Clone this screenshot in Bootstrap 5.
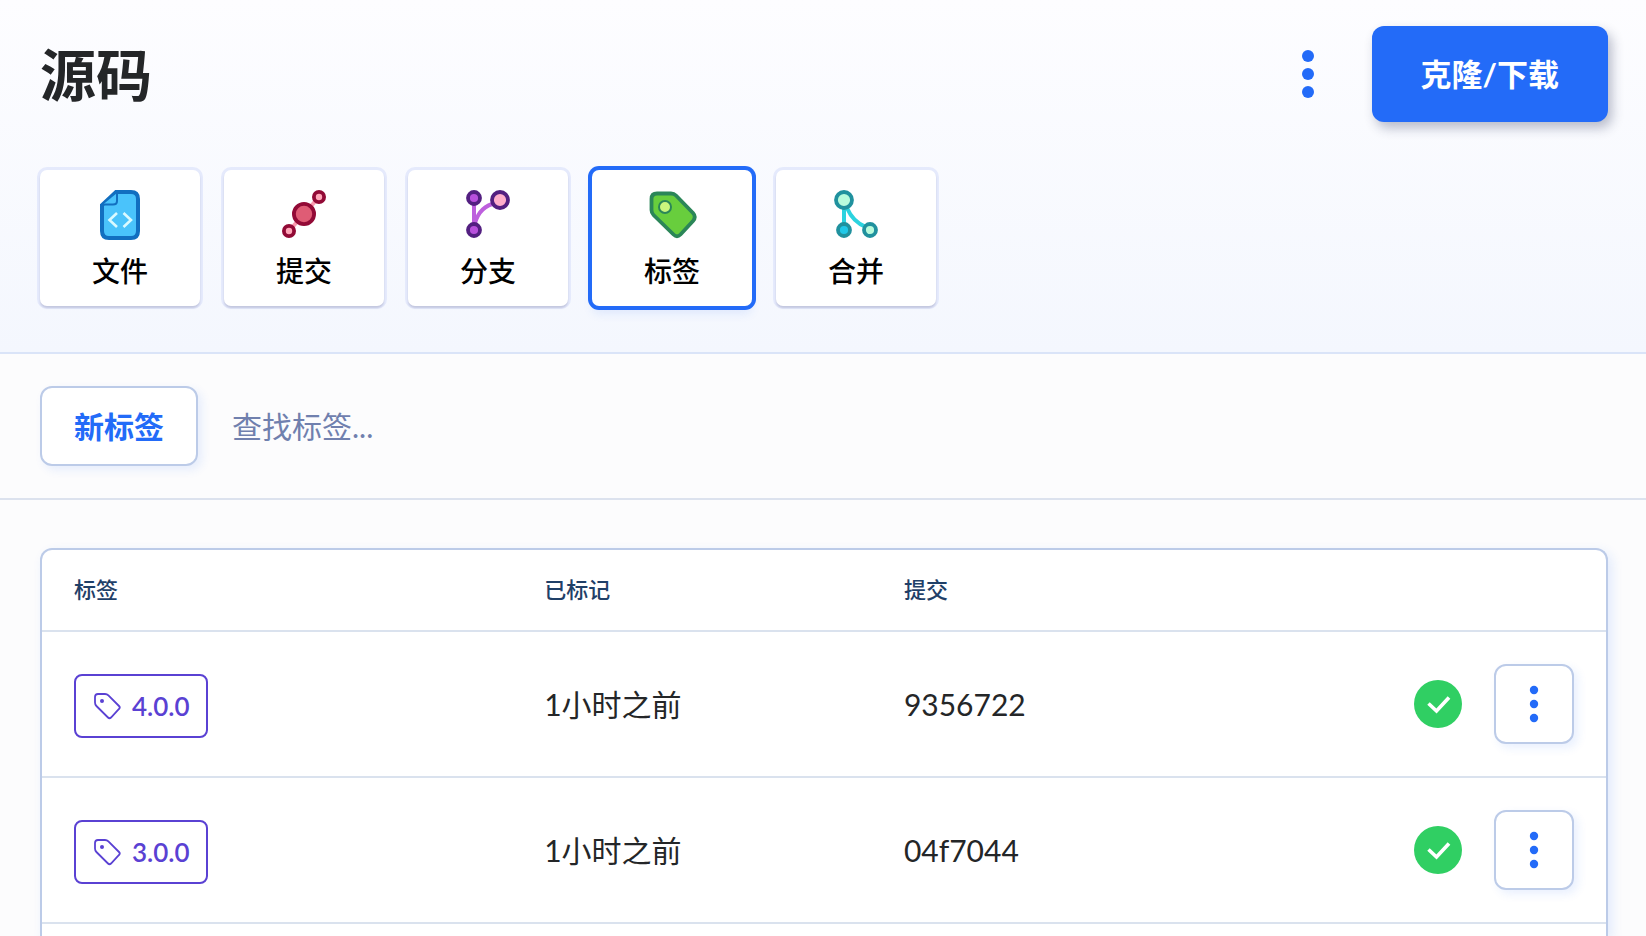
<!DOCTYPE html>
<html lang="zh-CN">
<head>
<meta charset="utf-8">
<meta name="viewport" content="width=device-width, initial-scale=1">
<title>源码</title>
<link href="https://cdn.jsdelivr.net/npm/bootstrap@5.3.0/dist/css/bootstrap.min.css" rel="stylesheet">
<style>
  :root { --brand: #236bf8; --edge: #bccbe8; --rule: #dae2ee; --soft: 4px 4px 10px rgba(35, 107, 248, .1); }
  body { font-family: Lato, "Noto Sans CJK SC", sans-serif; font-size: 30px; line-height: 40px; color: #242628; background: #fcfcfd; }
  .source-head { padding: 26px 38px 46px 40px; background: linear-gradient(#fdfdff, #f4f7fe); border-bottom: 2px solid #dae4f8; }
  .source-head h1 { padding-top: 2px; font-size: 56px; line-height: 64px; font-weight: 700; color: #242628; }
  .dots-btn { width: 64px; height: 64px; color: var(--brand); }
  .clone-btn { height: 96px; padding: 0 49px; font-size: 31px; font-weight: 700; border-radius: 12px; background: var(--brand); color: #fff; box-shadow: 4px 6px 12px rgba(30, 40, 80, .3); }
  .section-tabs { gap: 24px; margin-top: 48px; }
  .section-tab { width: 160px; height: 136px; gap: 12px; padding-top: 2px; border-radius: 7px; background: #fff; color: #000; font-size: 28px; line-height: 36px; font-weight: 500; text-decoration: none; box-shadow: 0 2px 2px rgba(60, 60, 110, .2), 0 0 0 3px #e5eafc; }
  .section-tab.current { box-shadow: 0 0 0 4px var(--brand), 0 8px 10px rgba(35, 107, 248, .1); }
  .tools { padding: 32px 40px; gap: 34px; border-bottom: 2px solid #dce2ee; }
  .edge-btn { height: 80px; border: 2px solid var(--edge); border-radius: 12px; background: #fff; color: var(--brand); box-shadow: var(--soft); }
  .new-btn { padding: 0 32px; font-size: 30px; font-weight: 700; }
  .row-btn { width: 80px; padding: 0; margin-left: 32px; }
  .find-box, .find-box:focus { padding: 0; border: 0; background: none; box-shadow: none; font-size: 30px; line-height: 40px; }
  .find-box::placeholder { color: #7080ae; opacity: 1; }
  .tags-area { padding: 48px 38px 0 40px; min-height: 0; }
  .tags-panel { background: #fff; border: 2px solid var(--edge); border-bottom: 0; border-radius: 12px 12px 0 0; box-shadow: 4px 4px 12px rgba(35, 107, 248, .12); }
  .tags-table { table-layout: fixed; border-collapse: separate; border-spacing: 0; --bs-table-bg: transparent; color: #242628; }
  .tags-table th, .tags-table td { padding: 0 32px; border-bottom: 2px solid var(--rule); vertical-align: middle; }
  .tags-table th + th, .tags-table td + td { padding-left: 33px; }
  .tags-table th { height: 82px; font-size: 22px; font-weight: 500; color: #1f4068; }
  .tags-table td { height: 146px; }
  .col-tag { width: 30%; } .col-when { width: 23%; }
  .tag-chip { height: 64px; margin-top: 4px; padding: 0 16px 0 17px; gap: 11px; border: 2px solid #5a41d3; border-radius: 8px; color: #5a41d3; font-size: 26px; font-weight: 600; text-decoration: none; }
  .commit-link { color: inherit; text-decoration: none; }
</style>
</head>
<body class="d-flex flex-column vh-100 overflow-hidden">
<svg class="d-none" aria-hidden="true">
  <symbol id="chip-tag" viewBox="0 0 28 28"><path d="M5 2H12Q14 2 15.400 3.400L26 14Q27.500 15.500 26 17L18 25.500Q16.500 27 15 25.500L3.400 14Q2 12.600 2 10.600V5Q2 2 5 2Z" fill="none" stroke="currentColor" stroke-width="1.800"/><circle cx="9" cy="9" r="2" fill="currentColor"/></symbol>
  <symbol id="passed" viewBox="0 0 48 48"><circle cx="24" cy="24" r="24" fill="#30cf63"/><path d="M14.500 23.500L22.500 31L35 17.500" fill="none" stroke="#fff" stroke-width="3.600"/></symbol>
  <symbol id="row-dots" viewBox="0 0 12 40"><g fill="currentColor"><circle cx="6" cy="6" r="4.200"/><circle cx="6" cy="20" r="4.200"/><circle cx="6" cy="34" r="4.200"/></g></symbol>
</svg>

<header class="source-head">
  <div class="d-flex align-items-center">
    <h1 class="m-0 me-auto">源码</h1>
    <button type="button" class="btn dots-btn p-0 border-0 me-4 d-flex align-items-center justify-content-center" aria-label="更多">
      <svg width="12" height="48" fill="currentColor"><circle cx="6" cy="6" r="6"/><circle cx="6" cy="24" r="6"/><circle cx="6" cy="42" r="6"/></svg>
    </button>
    <button type="button" class="btn clone-btn border-0 ms-2">克隆/下载</button>
  </div>
  <nav class="section-tabs d-flex flex-wrap" aria-label="源码">
    <a href="#" class="section-tab d-flex flex-column align-items-center justify-content-center">
      <svg width="60" height="52" viewBox="-30 -26 60 52"><path d="M-4 -23H11Q18 -23 18 -16V16Q18 23 11 23H-11Q-18 23 -18 16V-10Z" fill="#4ac3fb" stroke="#126fc0" stroke-width="4"/><path d="M-3 -22V-14Q-3 -10.500 -7 -10.500H-17" fill="#4ac3fb" stroke="#126fc0" stroke-width="2"/><path d="M-3 -2L-10.500 5L-3 12M3.500 -2L11 5L3.500 12" fill="none" stroke="#dafaff" stroke-width="2.600"/></svg>
      <span>文件</span>
    </a>
    <a href="#" class="section-tab d-flex flex-column align-items-center justify-content-center">
      <svg width="60" height="52" viewBox="-30 -26 60 52"><path d="M-15 16L15 -18" stroke="#fb9bb0" stroke-width="4"/><g stroke="#920a36" stroke-width="3.800"><circle cx="0" cy="-1" r="10.100" fill="#df5c75"/><circle cx="15" cy="-18" r="5.100" fill="#ffa6b8"/><circle cx="-15" cy="16" r="5.100" fill="#ffa6b8"/></g></svg>
      <span>提交</span>
    </a>
    <a href="#" class="section-tab d-flex flex-column align-items-center justify-content-center">
      <svg width="60" height="52" viewBox="-30 -26 60 52"><path d="M-14 -17V15M-13 8Q-8 -9 8 -12" fill="none" stroke="#bd5fdd" stroke-width="4"/><g stroke="#531f81" stroke-width="3.800"><circle cx="-14" cy="-17" r="6" fill="#b850dc"/><circle cx="-14" cy="15" r="6" fill="#b850dc"/><circle cx="12" cy="-15" r="8" fill="#ffadcb"/></g></svg>
      <span>分支</span>
    </a>
    <a href="#" class="section-tab current d-flex flex-column align-items-center justify-content-center" aria-current="page">
      <svg width="60" height="52" viewBox="-30 -26 60 52"><path d="M-15 -21.500H-1Q2 -21.500 4 -19.500L21 -2Q24.500 2 21 6L8.500 19.500Q5 23 1.500 19.500L-18.500 0Q-20.500 -2 -20.500 -5V-16Q-20.500 -21.500 -15 -21.500Z" fill="#68ce3d" stroke="#2b8658" stroke-width="3.800"/><circle cx="-7" cy="-8" r="6" fill="#caf57d" stroke="#2b8658" stroke-width="2"/></svg>
      <span>标签</span>
    </a>
    <a href="#" class="section-tab d-flex flex-column align-items-center justify-content-center">
      <svg width="60" height="52" viewBox="-30 -26 60 52"><path d="M-12 -15V15M-9 -7Q-3 7 10 12" fill="none" stroke="#2bd3df" stroke-width="4"/><g stroke="#20919e" stroke-width="3.800"><circle cx="-12" cy="-15" r="8" fill="#b8fbdc"/><circle cx="-12" cy="15" r="6" fill="#20c8e8"/><circle cx="14" cy="15" r="6" fill="#b8fbdc"/></g></svg>
      <span>合并</span>
    </a>
  </nav>
</header>

<section class="tools d-flex align-items-center">
  <button type="button" class="btn edge-btn new-btn flex-shrink-0">新标签</button>
  <input type="text" class="form-control find-box" placeholder="查找标签..." aria-label="查找标签">
</section>

<main class="tags-area d-flex flex-column flex-grow-1">
  <div class="tags-panel flex-grow-1">
    <table class="table tags-table mb-0">
      <thead>
        <tr><th class="col-tag" scope="col">标签</th><th class="col-when" scope="col">已标记</th><th scope="col">提交</th></tr>
      </thead>
      <tbody>
        <tr>
          <td><a href="#" class="tag-chip d-inline-flex align-items-center align-middle"><svg width="28" height="28"><use href="#chip-tag"/></svg>4.0.0</a></td>
          <td>1小时之前</td>
          <td><div class="d-flex align-items-center">
            <a href="#" class="commit-link me-auto">9356722</a>
            <svg width="48" height="48" role="img" aria-label="成功"><use href="#passed"/></svg>
            <button type="button" class="btn edge-btn row-btn d-flex align-items-center justify-content-center" aria-label="更多"><svg width="12" height="40"><use href="#row-dots"/></svg></button>
          </div></td>
        </tr>
        <tr>
          <td><a href="#" class="tag-chip d-inline-flex align-items-center align-middle"><svg width="28" height="28"><use href="#chip-tag"/></svg>3.0.0</a></td>
          <td>1小时之前</td>
          <td><div class="d-flex align-items-center">
            <a href="#" class="commit-link me-auto">04f7044</a>
            <svg width="48" height="48" role="img" aria-label="成功"><use href="#passed"/></svg>
            <button type="button" class="btn edge-btn row-btn d-flex align-items-center justify-content-center" aria-label="更多"><svg width="12" height="40"><use href="#row-dots"/></svg></button>
          </div></td>
        </tr>
      </tbody>
    </table>
  </div>
</main>
<script src="https://cdn.jsdelivr.net/npm/bootstrap@5.3.0/dist/js/bootstrap.bundle.min.js"></script>
</body>
</html>
